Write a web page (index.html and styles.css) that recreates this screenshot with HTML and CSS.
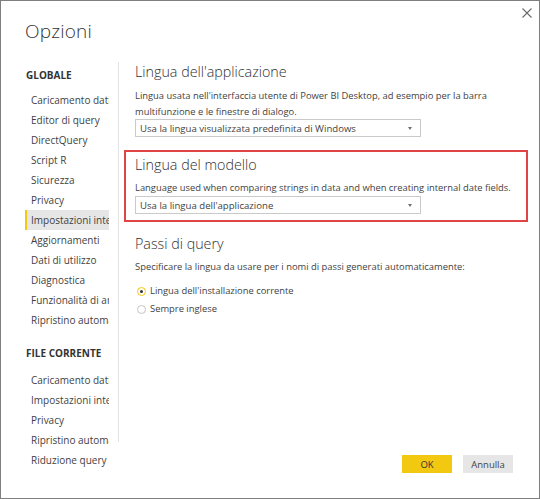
FILE: index.html
```html
<!DOCTYPE html>
<html lang="it">
<head>
<meta charset="utf-8">
<title>Opzioni</title>
<link rel="stylesheet" href="styles.css">
</head>
<body>
<div class="dialog">
  <button class="close" aria-label="Chiudi">
    <svg width="10" height="10" viewBox="0 0 10 10"><path d="M0.5 0.5 L9.5 9.5 M9.5 0.5 L0.5 9.5" stroke="#6a6a6a" stroke-width="1.1" fill="none"/></svg>
  </button>
  <header class="header">
    <h1 class="title">Opzioni</h1>
  </header>
  <div class="body">
    <nav class="nav">
      <div class="nav-group">GLOBALE</div>
      <ul class="nav-list">
        <li class="nav-item">Caricamento dati</li>
        <li class="nav-item">Editor di query</li>
        <li class="nav-item">DirectQuery</li>
        <li class="nav-item">Script R</li>
        <li class="nav-item">Sicurezza</li>
        <li class="nav-item">Privacy</li>
        <li class="nav-item active">Impostazioni internazionali</li>
        <li class="nav-item">Aggiornamenti</li>
        <li class="nav-item">Dati di utilizzo</li>
        <li class="nav-item">Diagnostica</li>
        <li class="nav-item">Funzionalità di anteprima</li>
        <li class="nav-item">Ripristino automatico</li>
      </ul>
      <div class="nav-group second">FILE CORRENTE</div>
      <ul class="nav-list second-list">
        <li class="nav-item">Caricamento dati</li>
        <li class="nav-item">Impostazioni internazionali</li>
        <li class="nav-item">Privacy</li>
        <li class="nav-item">Ripristino automatico</li>
        <li class="nav-item">Riduzione query</li>
      </ul>
    </nav>
    <div class="divider"></div>
    <main class="content">
      <section class="section first">
        <h2 class="heading">Lingua dell'applicazione</h2>
        <p class="desc">Lingua usata nell'interfaccia utente di Power BI Desktop, ad esempio per la barra multifunzione e le finestre di dialogo.</p>
        <div class="select"><span>Usa la lingua visualizzata predefinita di Windows</span><span class="arrow"></span></div>
      </section>
      <section class="section highlight">
        <h2 class="heading">Lingua del modello</h2>
        <p class="desc">Language used when comparing strings in data and when creating internal date fields.</p>
        <div class="select"><span>Usa la lingua dell'applicazione</span><span class="arrow"></span></div>
      </section>
      <section class="section third">
        <h2 class="heading">Passi di query</h2>
        <p class="desc">Specificare la lingua da usare per i nomi di passi generati automaticamente:</p>
        <div class="radios">
          <label class="radio checked"><span class="dot"></span>Lingua dell'installazione corrente</label>
          <label class="radio"><span class="dot"></span>Sempre inglese</label>
        </div>
      </section>
      <footer class="footer">
        <button class="btn primary">OK</button>
        <button class="btn">Annulla</button>
      </footer>
    </main>
  </div>
</div>
</body>
</html>
```
FILE: styles.css
```css
* { box-sizing: border-box; }
html, body { margin: 0; padding: 0; background: #fff; }
body { font-family: "Open Sans", "Noto Sans", sans-serif; color: #444; }

.dialog {
  position: relative;
  width: 540px;
  height: 499px;
  border: 1px solid #7f7f7f;
  background: #fff;
  display: flex;
  flex-direction: column;
  overflow: hidden;
}

.close {
  position: absolute;
  top: 6px;
  right: 6px;
  width: 12px;
  height: 12px;
  padding: 1px;
  border: 0;
  background: transparent;
  display: flex;
}

.header { height: 61px; flex: none; }
.title {
  margin: 0;
  padding: 15px 0 0 24px;
  font-size: 19px;
  font-weight: 300;
  line-height: 30px;
  color: #333;
  letter-spacing: 0.2px;
}

.body { flex: 1; display: flex; min-height: 0; }

.nav {
  width: 117px;
  flex: none;
  padding-left: 24px;
  padding-top: 5px;
  font-size: 10px;
}
.nav-group {
  padding-left: 1px;
  font-weight: 700;
  line-height: 16px;
  color: #333;
  font-size: 10px;
}
.nav-group.second { margin-top: 15px; }
.nav-list { list-style: none; margin: 7px 0 0; padding: 0; width: 84px; }
.second-list { margin-top: 9px; }
.nav-item {
  height: 20px;
  line-height: 20px;
  padding-left: 6px;
  white-space: nowrap;
  overflow: hidden;
  color: #3f3f3f;
}
.nav-item.active {
  background: #e6e6e6;
  border-left: 2px solid #f2c811;
  padding-left: 4px;
}

.divider { width: 1px; height: 380px; background: #e3e3e3; flex: none; }

.content {
  flex: 1;
  display: flex;
  flex-direction: column;
  padding: 0 11px 0 5px;
  font-size: 9.4px;
}
.section { padding: 0 11px; }
.section.highlight { border: 2px solid #e04444; padding: 3px 9px 6px; margin-top: 13px; }
.section.third { margin-top: 12px; }

.heading {
  margin: 0;
  font-size: 14.3px;
  font-weight: 300;
  line-height: 20px;
  color: #2f2f2f;
}
.desc {
  margin: 6px 0 0;
  line-height: 16px;
  color: #3f3f3f;
}
.select {
  width: 286px;
  height: 18px;
  border: 1px solid #cacaca;
  display: flex;
  align-items: center;
  justify-content: space-between;
  padding: 0 8px 0 4px;
  color: #3f3f3f;
  font-size: 9.6px;
}
.first .select { margin-top: -1px; }
.arrow {
  width: 0; height: 0;
  border-left: 2.5px solid transparent;
  border-right: 2.5px solid transparent;
  border-top: 3px solid #707070;
}
.highlight .desc { margin-top: 5px; }
.third .desc { margin-top: 5px; }

.radios { margin-top: 7px; display: flex; flex-direction: column; }
.radio { display: flex; align-items: center; height: 18px; line-height: 18px; color: #3f3f3f; }
.dot {
  width: 9px; height: 9px;
  border: 1px solid #c4c4c4;
  border-radius: 50%;
  margin: 0 4px 0 2px;
  display: flex; align-items: center; justify-content: center;
  flex: none;
}
.radio.checked .dot { border-color: #f2c811; }
.radio.checked .dot::after {
  content: "";
  width: 3px; height: 3px; border-radius: 50%; background: #333;
}

.footer {
  margin-top: auto;
  display: flex;
  justify-content: flex-end;
  gap: 11px;
  padding: 0 15px 25px 0;
}
.btn {
  width: 50px;
  height: 18px;
  border: 0;
  background: #e6e6e6;
  font-family: "Open Sans", "Noto Sans", sans-serif;
  font-size: 9.5px;
  color: #444;
  padding: 0;
}
.btn.primary { background: #f2c811; color: #333; }
```
